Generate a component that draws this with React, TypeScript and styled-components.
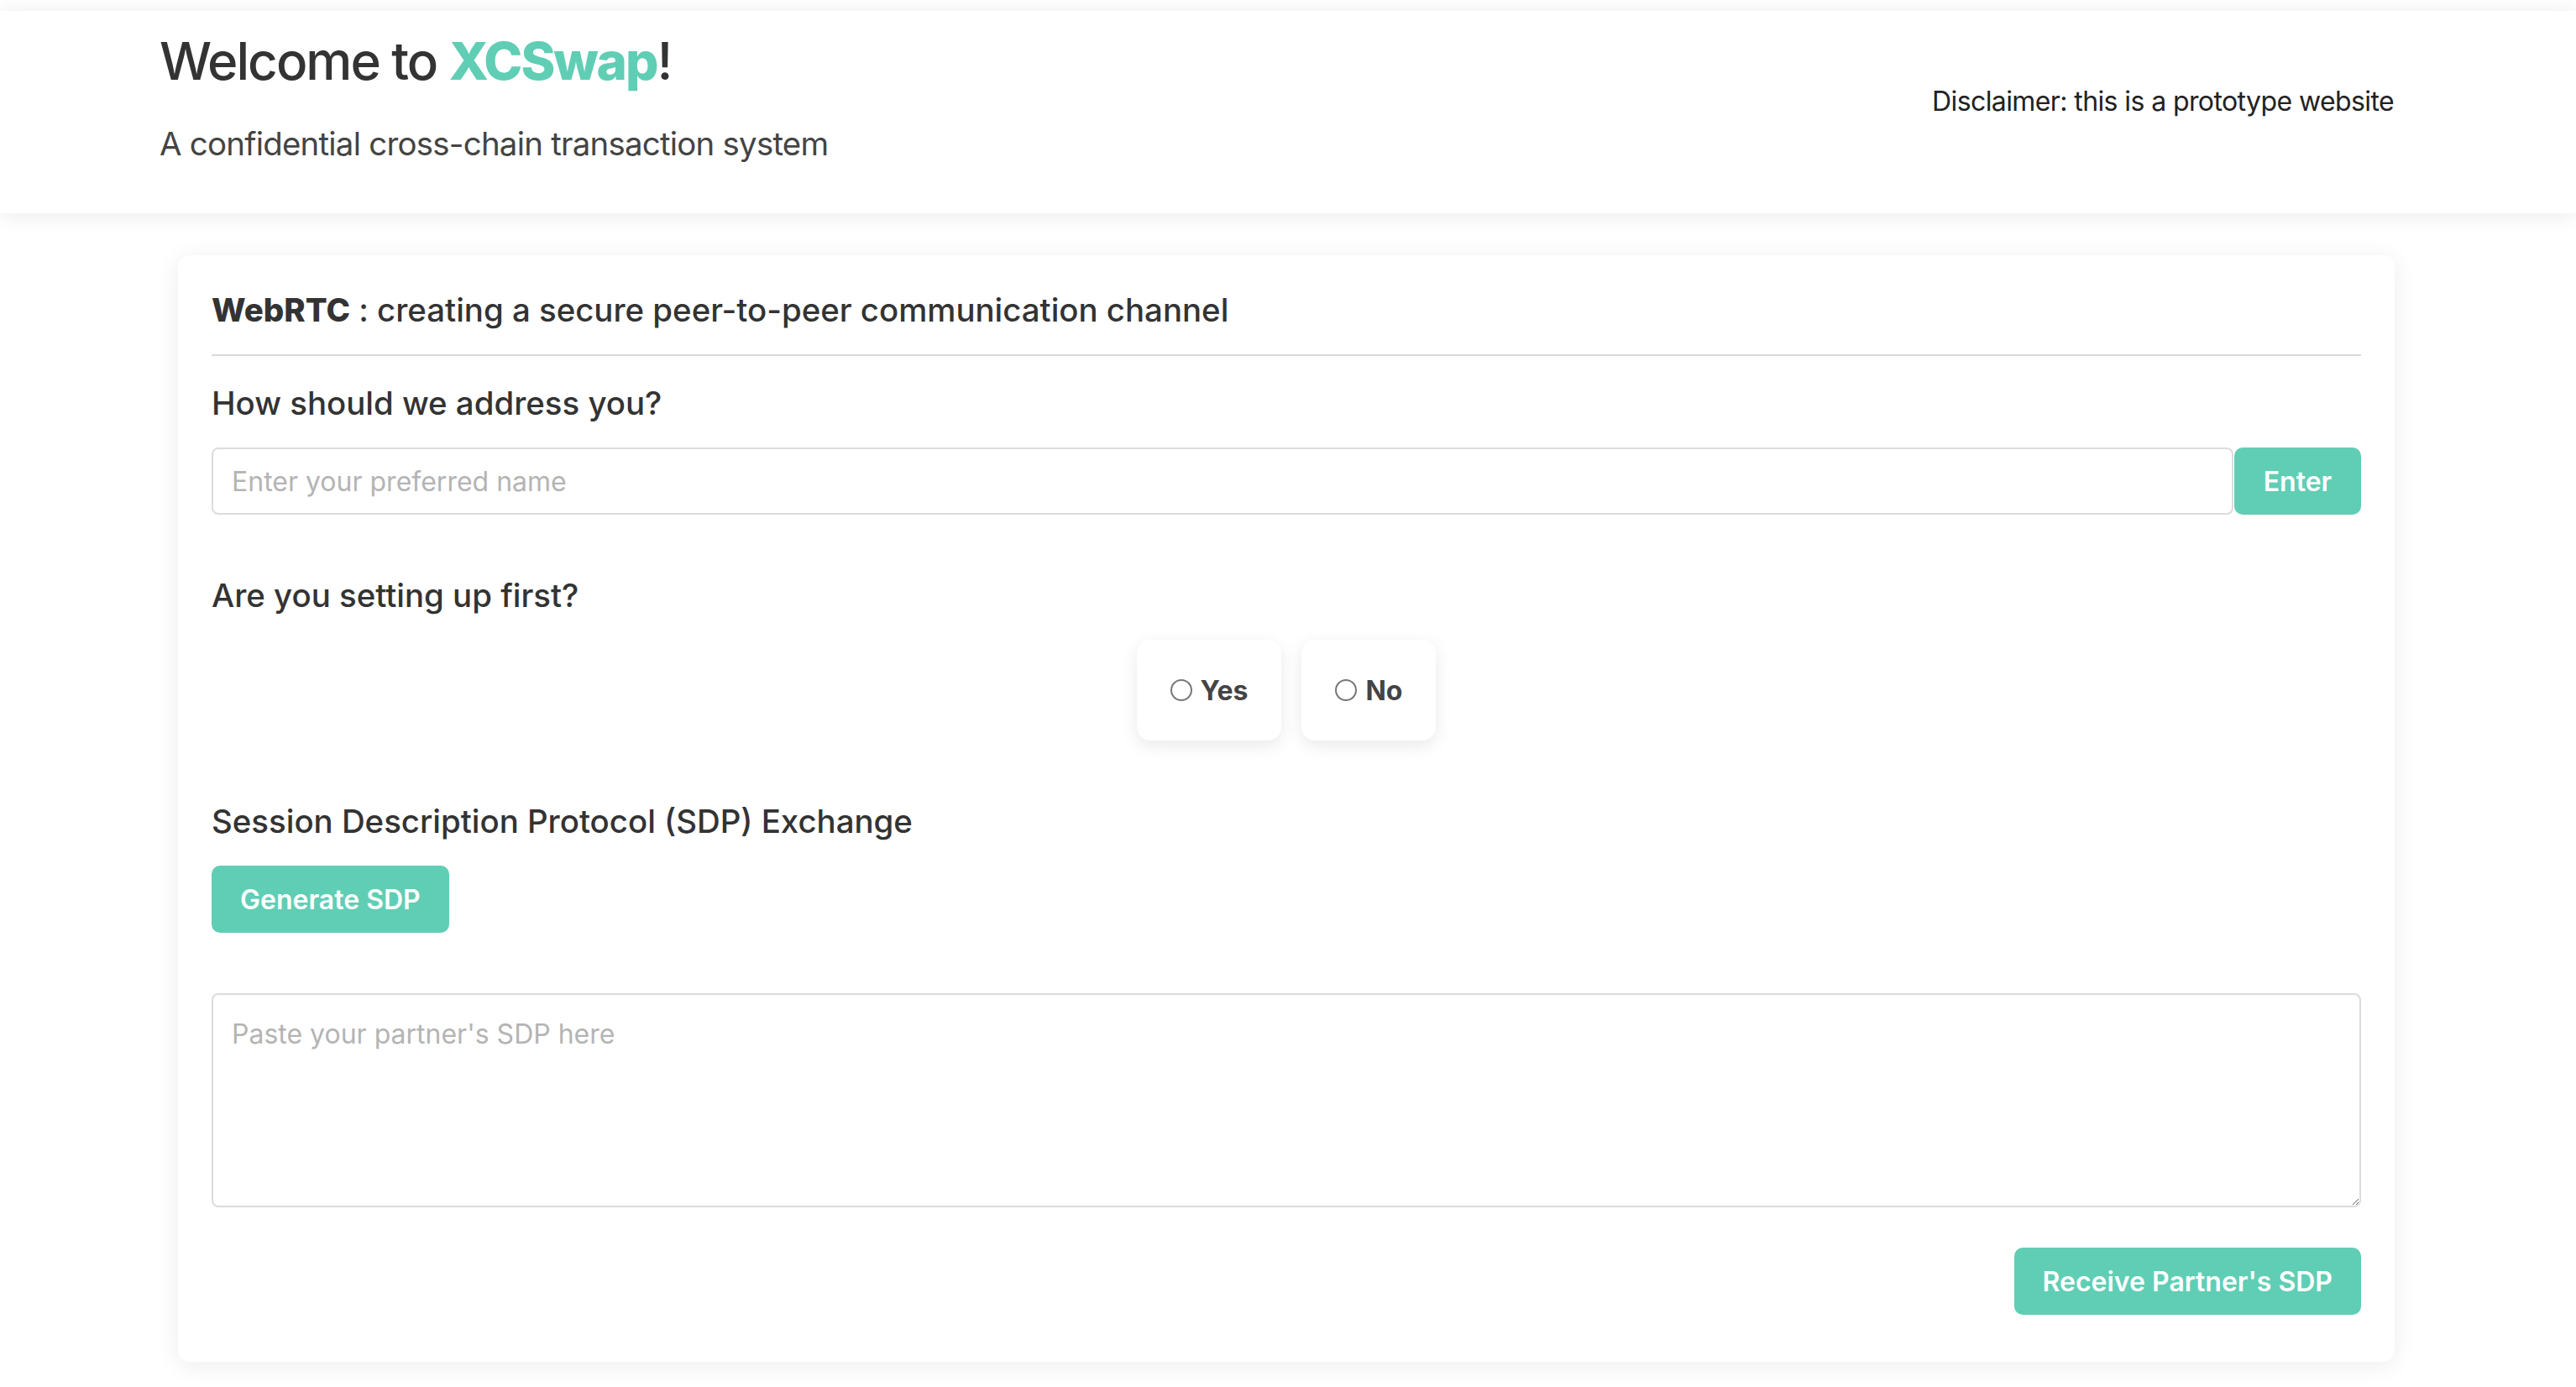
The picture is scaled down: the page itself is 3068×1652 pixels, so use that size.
import React from "react";
import styled, { createGlobalStyle } from "styled-components";

const teal = "#60ceb4";

const Global = createGlobalStyle`
  * { box-sizing: border-box; }
  html, body { margin: 0; padding: 0; background: #ffffff; }
  body { font-family: Inter, "Noto Sans", "Liberation Sans", sans-serif; color: #333; }
`;

const Page = styled.div`
  padding-top: 13px;
  padding-bottom: 40px;
`;

const Header = styled.header`
  display: flex;
  justify-content: space-between;
  align-items: flex-start;
  padding: 23px 217px 59px 190px;
  background: #fff;
  box-shadow: 0 2px 24px rgba(0, 0, 0, 0.09);
`;

const TitleBlock = styled.div`
  display: flex;
  flex-direction: column;
  gap: 37px;
`;

const Title = styled.h1`
  margin: 0;
  font-size: 62px;
  line-height: 1.2;
  font-weight: 500;
  color: #333;
  letter-spacing: -2px;
`;

const Brand = styled.span`
  color: ${teal};
  font-weight: 800;
`;

const Subtitle = styled.p`
  margin: 0;
  font-size: 38.4px;
  line-height: 48px;
  font-weight: 400;
  color: #444;
  letter-spacing: -0.75px;
`;

const Disclaimer = styled.div`
  margin-top: 66px;
  font-size: 32px;
  line-height: 38px;
  color: #222;
  letter-spacing: -0.6px;
`;

const Card = styled.main`
  margin: 50px 0 0 212px;
  width: 2640px;
  padding: 42px 40px 56px;
  background: #fff;
  border-radius: 14px;
  box-shadow: 0 4px 28px rgba(0, 0, 0, 0.08);
  display: flex;
  flex-direction: column;
`;

const CardTitle = styled.h2`
  margin: 0;
  padding-bottom: 30px;
  border-bottom: 2px solid #d8d8d8;
  font-size: 38.4px;
  line-height: 46px;
  font-weight: 500;
  color: #333;
`;

const Strong = styled.b`
  font-weight: 800;
`;

const Question = styled.h3<{ $top: number }>`
  margin: ${(p) => p.$top}px 0 30px;
  font-size: 38.4px;
  line-height: 46px;
  font-weight: 500;
  color: #333;
`;

const InputRow = styled.div`
  display: flex;
  gap: 1px;
`;

const NameInput = styled.input`
  flex: 1;
  height: 80px;
  border: 2px solid #dcdcdc;
  border-radius: 8px;
  padding: 0 22px;
  font: inherit;
  font-size: 32px;
  color: #333;
  outline: none;
  &::placeholder { color: #b4b4b4; }
`;

const Button = styled.button`
  height: 80px;
  padding: 0 34px;
  border: none;
  border-radius: 10px;
  background: ${teal};
  color: #fff;
  font: inherit;
  font-size: 32px;
  font-weight: 600;
  cursor: pointer;
`;

const EnterButton = styled(Button)`
  width: 151px;
  padding: 0;
`;

const ChoiceRow = styled.div`
  display: flex;
  justify-content: center;
  gap: 24px;
`;

const Choice = styled.label`
  display: flex;
  align-items: center;
  gap: 10px;
  height: 120px;
  padding: 0 40px;
  background: #fff;
  border-radius: 16px;
  box-shadow: 0 6px 20px rgba(0, 0, 0, 0.09);
  font-size: 32px;
  font-weight: 700;
  color: #444;
`;

const Radio = styled.input`
  appearance: none;
  margin: 0;
  width: 26px;
  height: 26px;
  border: 2px solid #777;
  border-radius: 50%;
  background: #fff;
`;

const GenerateRow = styled.div`
  display: flex;
`;

const SdpArea = styled.textarea`
  margin-top: 72px;
  height: 255px;
  width: 100%;
  border: 2px solid #dcdcdc;
  border-radius: 8px;
  padding: 27px 22px;
  font: inherit;
  font-size: 32px;
  color: #333;
  resize: vertical;
  outline: none;
  &::placeholder { color: #b4b4b4; }
`;

const ActionRow = styled.div`
  display: flex;
  justify-content: flex-end;
  margin-top: 48px;
`;

export default function App() {
  return (
    <Page>
      <Global />
      <Header>
        <TitleBlock>
          <Title>
            Welcome to <Brand>XCSwap</Brand>!
          </Title>
          <Subtitle>A confidential cross-chain transaction system</Subtitle>
        </TitleBlock>
        <Disclaimer>Disclaimer: this is a prototype website</Disclaimer>
      </Header>
      <Card>
        <CardTitle>
          <Strong>WebRTC</Strong> : creating a secure peer-to-peer communication channel
        </CardTitle>
        <Question $top={33}>How should we address you?</Question>
        <InputRow>
          <NameInput placeholder="Enter your preferred name" />
          <EnterButton>Enter</EnterButton>
        </InputRow>
        <Question $top={73}>Are you setting up first?</Question>
        <ChoiceRow>
          <Choice>
            <Radio type="radio" name="first" />
            Yes
          </Choice>
          <Choice>
            <Radio type="radio" name="first" />
            No
          </Choice>
        </ChoiceRow>
        <Question $top={73}>Session Description Protocol (SDP) Exchange</Question>
        <GenerateRow>
          <Button>Generate SDP</Button>
        </GenerateRow>
        <SdpArea placeholder="Paste your partner's SDP here" />
        <ActionRow>
          <Button>Receive Partner's SDP</Button>
        </ActionRow>
      </Card>
    </Page>
  );
}
